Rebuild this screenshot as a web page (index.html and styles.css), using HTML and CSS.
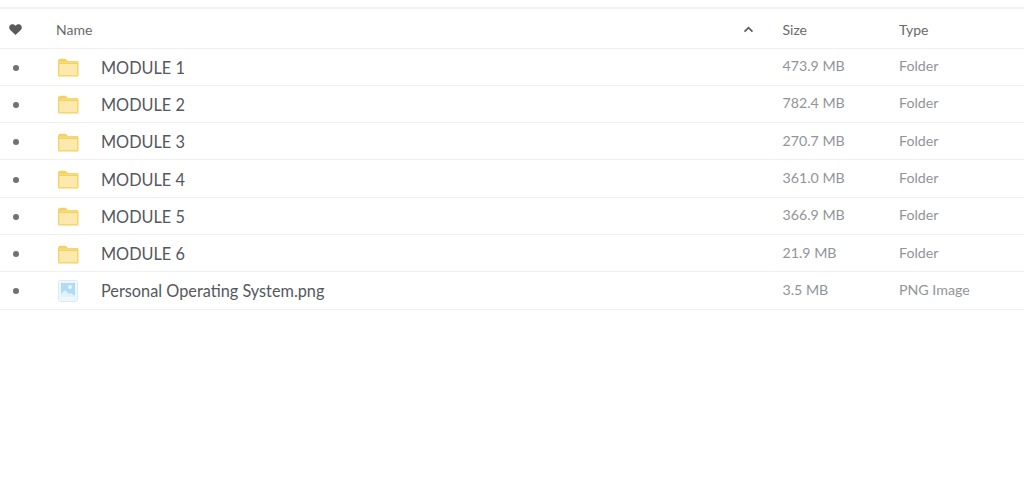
FILE: index.html
```html
<!DOCTYPE html>
<html lang="en">
<head>
<meta charset="utf-8">
<title>Files</title>
<link rel="stylesheet" href="styles.css">
</head>
<body>
<svg class="defs" width="0" height="0" aria-hidden="true">
  <symbol id="folder" viewBox="0 0 22 19">
    <path d="M1 3a2 2 0 0 1 .8-1.500C2 1 2.500.8 3 .8h5.500L11 3h9a1.500 1.500 0 0 1 1.500 1.500V17a1.500 1.500 0 0 1-1.500 1.500H2.500A1.500 1.500 0 0 1 1 17z" fill="#f5d25f"/>
    <rect x="2.200" y="6" width="18" height="11.200" fill="#fbe9ae"/>
    <path d="M2 4.200h18.200" stroke="#f8dc85" stroke-width="1.200"/>
  </symbol>
  <symbol id="image" viewBox="0 0 20 22">
    <rect x=".5" y=".5" width="19" height="21" rx="2" fill="#eef7fc" stroke="#d8ecfa"/>
    <rect x="3" y="3" width="14" height="14" fill="#b0dbf6"/>
    <circle cx="12" cy="7" r="2" fill="#e8f5fd"/>
    <path d="M3 14l4-4 4 4 2-1 4 3v1H3z" fill="#e2f2fb"/>
  </symbol>
</svg>
<main class="list">
  <div class="row head">
    <div class="c-fav"><svg class="heart" viewBox="0 0 14 12"><path d="M7 12 1 6.200C-.5 4.500 0 1.800 1.800.7 3.700-.3 5.800.2 7 2c1.200-1.800 3.300-2.300 5.200-1.300C14 1.800 14.500 4.500 13 6.200z"/></svg></div>
    <div class="c-icon name-head">Name</div>
    <div class="c-sort"><svg class="chev" viewBox="0 0 12 8"><path d="M1.500 6.500 6 2l4.500 4.500" fill="none" stroke="#5d5d5d" stroke-width="2"/></svg></div>
    <div>Size</div>
    <div>Type</div>
  </div>
  <div class="row"><div class="c-fav"><span class="dot"></span></div><div class="c-icon"><svg class="ico"><use href="#folder"/></svg><span class="name">MODULE 1</span></div><div></div><div class="meta">473.9 MB</div><div class="meta">Folder</div></div>
  <div class="row"><div class="c-fav"><span class="dot"></span></div><div class="c-icon"><svg class="ico"><use href="#folder"/></svg><span class="name">MODULE 2</span></div><div></div><div class="meta">782.4 MB</div><div class="meta">Folder</div></div>
  <div class="row"><div class="c-fav"><span class="dot"></span></div><div class="c-icon"><svg class="ico"><use href="#folder"/></svg><span class="name">MODULE 3</span></div><div></div><div class="meta">270.7 MB</div><div class="meta">Folder</div></div>
  <div class="row"><div class="c-fav"><span class="dot"></span></div><div class="c-icon"><svg class="ico"><use href="#folder"/></svg><span class="name">MODULE 4</span></div><div></div><div class="meta">361.0 MB</div><div class="meta">Folder</div></div>
  <div class="row"><div class="c-fav"><span class="dot"></span></div><div class="c-icon"><svg class="ico"><use href="#folder"/></svg><span class="name">MODULE 5</span></div><div></div><div class="meta">366.9 MB</div><div class="meta">Folder</div></div>
  <div class="row"><div class="c-fav"><span class="dot"></span></div><div class="c-icon"><svg class="ico"><use href="#folder"/></svg><span class="name">MODULE 6</span></div><div></div><div class="meta">21.9 MB</div><div class="meta">Folder</div></div>
  <div class="row"><div class="c-fav"><span class="dot"></span></div><div class="c-icon"><svg class="ico ico-img"><use href="#image"/></svg><span class="name">Personal Operating System.png</span></div><div></div><div class="meta">3.5 MB</div><div class="meta">PNG Image</div></div>
</main>
</body>
</html>
```
FILE: styles.css
```css
html, body {
  margin: 0;
  background: #fff;
}
body {
  height: 478px;
  overflow: hidden;
  font-family: Lato, "Open Sans", sans-serif;
  color: #66686b;
  padding-top: 7px;
  box-sizing: border-box;
}
.defs {
  position: absolute;
}
.list {
  border-top: 2px solid #f1f1f1;
}
.row {
  display: grid;
  grid-template-columns: 56px 672px 54.500px 116.500px 1fr;
  align-items: center;
  height: 37.300px;
  box-sizing: border-box;
  border-bottom: 1.500px solid #efefef;
  font-size: 14.200px;
}
.head {
  height: 39.500px;
  padding-top: 3px;
  color: #6a6a6a;
  font-size: 14px;
}
.c-fav {
  padding-left: 9px;
  display: flex;
}
.row:not(.head) .c-fav {
  padding-left: 13px;
  padding-top: 2px;
}
.c-icon {
  display: flex;
  align-items: center;
}
.heart {
  width: 13px;
  height: 11px;
  fill: #5e5a5c;
}
.chev {
  width: 11px;
  height: 7px;
  display: block;
  margin-left: 15px;
  margin-bottom: 1px;
}
.dot {
  width: 6px;
  height: 6px;
  border-radius: 50%;
  background: #6f7174;
}
.ico {
  width: 22px;
  height: 19px;
  margin: 2px 22px 0 1px;
  flex: none;
}
.ico-img {
  width: 20px;
  height: 22px;
  margin: 2px 23px 0 2px;
}
.name {
  font-size: 16.300px;
  color: #55585d;
  padding-top: 1px;
}
.meta {
  color: #929497;
  padding-bottom: 2px;
}
```
